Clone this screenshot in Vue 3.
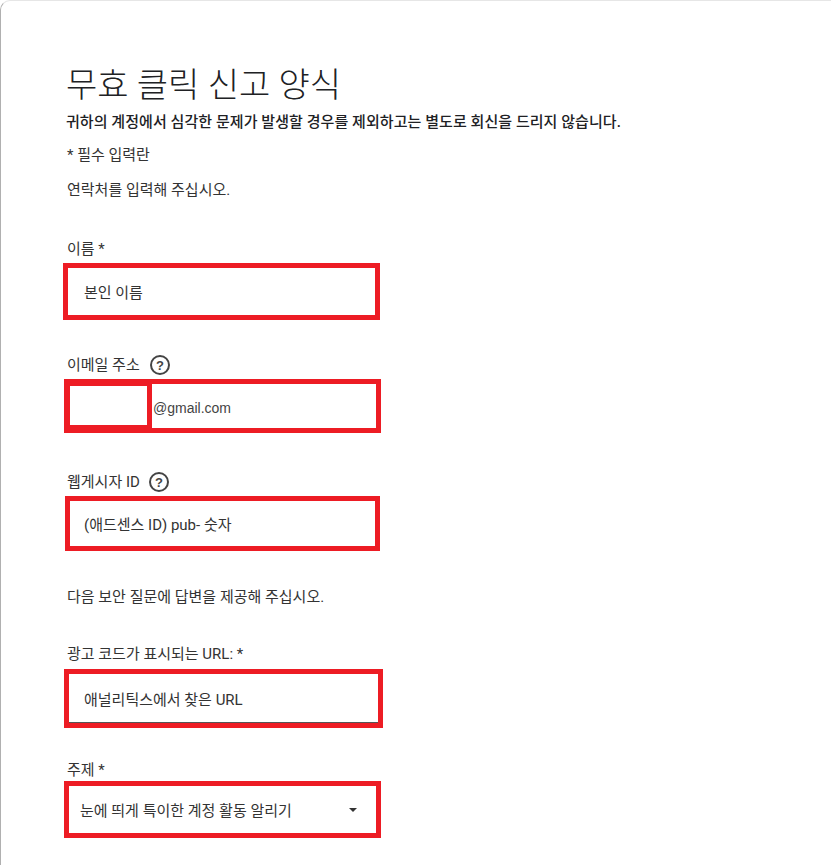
<script setup>
const title = '무효 클릭 신고 양식';
</script>

<template>
  <div class="page">
    <h1 class="title">{{ title }}</h1>
    <p class="notice">귀하의 계정에서 심각한 문제가 발생할 경우를 제외하고는 별도로 회신을 드리지 않습니다.</p>
    <p class="required">* 필수 입력란</p>
    <p class="section first">연락처를 입력해 주십시오.</p>

    <label class="label name-label">이름 *</label>
    <div class="box name-box">본인 이름</div>

    <div class="label help-label email-label">
      <span>이메일 주소</span>
      <svg class="help" viewBox="0 0 20 20">
        <circle cx="10" cy="10" r="9" fill="none" stroke="#444" stroke-width="2" />
        <text x="10" y="14.7" text-anchor="middle" class="help-mark">?</text>
      </svg>
    </div>
    <div class="box email-box">
      <div class="email-mask"></div>
      <span class="email-domain">@gmail.com</span>
    </div>

    <div class="label help-label pub-label">
      <span>웹게시자 ID</span>
      <svg class="help" viewBox="0 0 20 20">
        <circle cx="10" cy="10" r="9" fill="none" stroke="#444" stroke-width="2" />
        <text x="10" y="14.7" text-anchor="middle" class="help-mark">?</text>
      </svg>
    </div>
    <div class="box pub-box">(애드센스 ID) pub- 숫자</div>

    <p class="section second">다음 보안 질문에 답변을 제공해 주십시오.</p>

    <label class="label url-label">광고 코드가 표시되는 URL: *</label>
    <div class="box url-box"><span class="url-text">애널리틱스에서 찾은 URL</span></div>

    <label class="label subject-label">주제 *</label>
    <div class="box subject-box">
      <span>눈에 띄게 특이한 계정 활동 알리기</span>
      <i class="caret"></i>
    </div>
  </div>
</template>

<style>
html, body {
  background: #fff;
  overflow: hidden;
}
</style>

<style scoped>
.page {
  box-sizing: border-box;
  width: 831px;
  height: 865px;
  padding: 60px 0 0 65px;
  overflow: hidden;
  background: #fff;
  border-left: 1px solid #b0b0b0;
  border-top: 1px solid #e6e6e6;
  border-top-left-radius: 10px;
  font-family: Roboto, "Noto Sans CJK KR", sans-serif;
  font-size: 15px;
  color: #333;
}

p {
  margin: 0;
}

.title {
  margin: 0;
  font-size: 34px;
  line-height: 48px;
  font-weight: 300;
  color: #202124;
}

.notice {
  margin-top: 3px;
  font-size: 15px;
  letter-spacing: 0.06px;
  line-height: 20px;
  font-weight: 500;
  color: #202124;
}

.required {
  margin: 14px 0 0 1px;
  line-height: 18px;
}

.section {
  margin-left: 1px;
  line-height: 18px;
}

.section.first {
  margin-top: 17px;
}

.section.second {
  margin-top: 37px;
}

.label {
  display: block;
  margin-left: 1px;
  line-height: 18px;
}

.help-label {
  display: flex;
  align-items: center;
  gap: 10px;
}

.help {
  width: 20px;
  height: 20px;
}

.help-mark {
  font-family: "Liberation Sans", sans-serif;
  font-size: 13px;
  font-weight: 700;
  fill: #444;
}

.name-label {
  margin-top: 41px;
}

.email-label {
  margin-top: 35px;
}

.pub-label {
  margin-top: 39px;
  gap: 9px;
}

.url-label {
  margin-top: 39px;
}

.subject-label {
  margin-top: 33px;
}

.box {
  box-sizing: border-box;
  display: flex;
  align-items: center;
  border: 5px solid #ed1c24;
  background: #fff;
  color: #333;
}

.name-box {
  width: 317px;
  height: 57px;
  margin: 5px 0 0 -3px;
  padding-left: 16px;
}

.email-box {
  position: relative;
  width: 317px;
  height: 54px;
  margin: 4px 0 0 -2px;
  padding: 4px 0 0 84px;
}

.email-mask {
  position: absolute;
  left: -5px;
  top: -5px;
  width: 88px;
  height: 54px;
  box-sizing: border-box;
  border: solid #ed1c24;
  border-width: 7px 5px 8px 6px;
  background: #fff;
}

.email-domain {
  font-family: "Liberation Sans", sans-serif;
  font-size: 14px;
  color: #444;
}

.pub-box {
  width: 315px;
  height: 55px;
  margin: 4px 0 0 -1px;
  padding-left: 14px;
}

.url-box {
  width: 319px;
  height: 59px;
  margin: 6px 0 0 -2px;
  padding-left: 15px;
  box-shadow: inset 0 -1px 0 #555;
}

.url-text {
  color: #333;
}

.subject-box {
  justify-content: space-between;
  width: 317px;
  height: 57px;
  margin: 2px 0 0 -2px;
  padding: 0 19px 0 11px;
}

.caret {
  width: 0;
  height: 0;
  border-left: 4px solid transparent;
  border-right: 4px solid transparent;
  border-top: 4px solid #333;
}
</style>
